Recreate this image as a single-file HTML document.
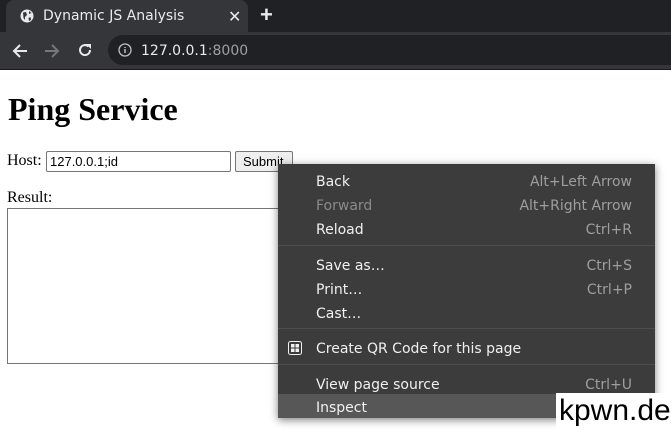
<!DOCTYPE html>
<html><head><style>
*{margin:0;padding:0;box-sizing:border-box}
body{width:671px;height:429px;overflow:hidden;background:#fff;position:relative;font-family:"Liberation Sans",sans-serif}
.tabbar{position:absolute;left:0;top:0;width:671px;height:32px;background:#202124}
.tab{position:absolute;left:6px;top:0;width:242px;height:32px;background:#35363a;border-radius:8px 8px 0 0;color:#e8eaed;font-size:14px;font-family:"DejaVu Sans","Liberation Sans",sans-serif}
.toolbar{position:absolute;left:0;top:32px;width:671px;height:38px;background:#35363a;border-bottom:1px solid #1a1a1a}
.omni{position:absolute;left:108px;top:3px;width:563px;height:30px;background:#202124;border-radius:15px 0 0 15px}
.page{position:absolute;left:0;top:71px;width:671px;height:358px;font-family:"Liberation Serif",serif;color:#000}
.menu{position:absolute;left:278px;top:164px;width:377px;height:254px;background:#3c3c3c;box-shadow:0 2px 8px rgba(0,0,0,.5);font-family:"DejaVu Sans","Liberation Sans",sans-serif;font-size:14px;color:#f0f0f0}
.it{position:absolute;left:0;width:377px;height:24px;line-height:24px}
.it .l{position:absolute;left:38px;top:2px}
.it .r{position:absolute;right:23px;top:2px;color:#9e9e9e}
.sep{position:absolute;left:0;width:377px;height:1px;background:#4e4e4e}
</style></head><body>
<div class="tabbar">
 <div class="tab">
  <svg style="position:absolute;left:14px;top:9px" width="14" height="14" viewBox="0 0 14 14"><circle cx="7" cy="7" r="6.5" fill="#e8eaed"/><path d="M3 3.5 L6 3 L7 6 L5 8 L5 11 L3.5 9 Z M8.5 9 L10.5 8 L11 11 L9 12 Z M9 2 L11.5 4 L9 5 Z" fill="#35363a"/></svg>
  <span style="position:absolute;left:37px;top:8px">Dynamic JS Analysis</span>
  <span style="position:absolute;left:222px;top:7px;font-size:16px">✕</span>
 </div>
 <span style="position:absolute;left:260px;top:2px;color:#e8eaed;font-size:22px;font-weight:bold">+</span>
</div>
<div class="toolbar">
 <svg style="position:absolute;left:12px;top:11px" width="16" height="16" viewBox="0 0 16 16"><path d="M15 8H2M8 2L2 8l6 6" stroke="#e8eaed" stroke-width="2" fill="none"/></svg>
 <svg style="position:absolute;left:44px;top:11px" width="16" height="16" viewBox="0 0 16 16"><path d="M1 8h13M8 2l6 6-6 6" stroke="#75777a" stroke-width="2" fill="none"/></svg>
 <svg style="position:absolute;left:77px;top:10px" width="16" height="16" viewBox="0 0 16 16"><path d="M13 8A5 5 0 1 1 11.5 4.5" stroke="#e8eaed" stroke-width="2" fill="none"/><path d="M9 2h5v5z" fill="#e8eaed"/></svg>
 <div class="omni">
  <svg style="position:absolute;left:10px;top:8px" width="14" height="14" viewBox="0 0 14 14"><circle cx="7" cy="7" r="6" stroke="#bdc1c6" stroke-width="1.3" fill="none"/><path d="M7 6v4M7 4v1" stroke="#bdc1c6" stroke-width="1.5"/></svg>
  <span style="position:absolute;left:33px;top:8px;font-size:14px;font-family:'DejaVu Sans',sans-serif;color:#e8eaed">127.0.0.1<span style="color:#9aa0a6">:8000</span></span>
 </div>
</div>
<div class="page">
 <div style="position:absolute;left:8px;top:20px;font-size:32px;font-weight:bold">Ping Service</div>
 <div style="position:absolute;left:7px;top:81px;font-size:16px">Host:</div>
 <div style="position:absolute;left:46px;top:80px;width:185px;height:21px;border:1px solid #767676;border-radius:2px;font-size:13px;padding:2px 3px;font-family:'Liberation Sans',sans-serif">127.0.0.1;id</div>
 <div style="position:absolute;left:235px;top:80px;width:58px;height:21px;border:1px solid #767676;border-radius:2px;background:#efefef;font-size:13px;padding:2px 7px;font-family:'Liberation Sans',sans-serif">Submit</div>
 <div style="position:absolute;left:7px;top:118px;font-size:16px">Result:</div>
 <div style="position:absolute;left:7px;top:137px;width:290px;height:156px;border:1px solid #767676"></div>
</div>
<div class="menu">
 <div class="it" style="top:4px"><span class="l">Back</span><span class="r">Alt+Left Arrow</span></div>
 <div class="it" style="top:28px;color:#8a8a8a"><span class="l">Forward</span><span class="r">Alt+Right Arrow</span></div>
 <div class="it" style="top:52px"><span class="l">Reload</span><span class="r">Ctrl+R</span></div>
 <div class="sep" style="top:81px"></div>
 <div class="it" style="top:88px"><span class="l">Save as…</span><span class="r">Ctrl+S</span></div>
 <div class="it" style="top:112px"><span class="l">Print…</span><span class="r">Ctrl+P</span></div>
 <div class="it" style="top:136px"><span class="l">Cast…</span></div>
 <div class="sep" style="top:164px"></div>
 <div class="it" style="top:171px"><svg style="position:absolute;left:10px;top:6px" width="14" height="14" viewBox="0 0 14 14"><rect x=".5" y=".5" width="13" height="13" rx="2" stroke="#f0f0f0" fill="none"/><rect x="3" y="3" width="3.5" height="3.5" fill="#f0f0f0"/><rect x="7.5" y="3" width="3.5" height="3.5" fill="#f0f0f0"/><rect x="3" y="7.5" width="3.5" height="3.5" fill="#f0f0f0"/><rect x="7.5" y="7.5" width="3.5" height="3.5" fill="#f0f0f0"/></svg><span class="l">Create QR Code for this page</span></div>
 <div class="sep" style="top:200px"></div>
 <div class="it" style="top:207px"><span class="l">View page source</span><span class="r">Ctrl+U</span></div>
 <div class="it" style="top:230px;background:#575757"><span class="l">Inspect</span></div>
</div>
<div style="position:absolute;left:556px;top:393px;font-size:30px;font-family:'Liberation Sans',sans-serif;color:#000;background:#fff;line-height:36px;padding:0 3px">kpwn.de</div>
</body></html>
